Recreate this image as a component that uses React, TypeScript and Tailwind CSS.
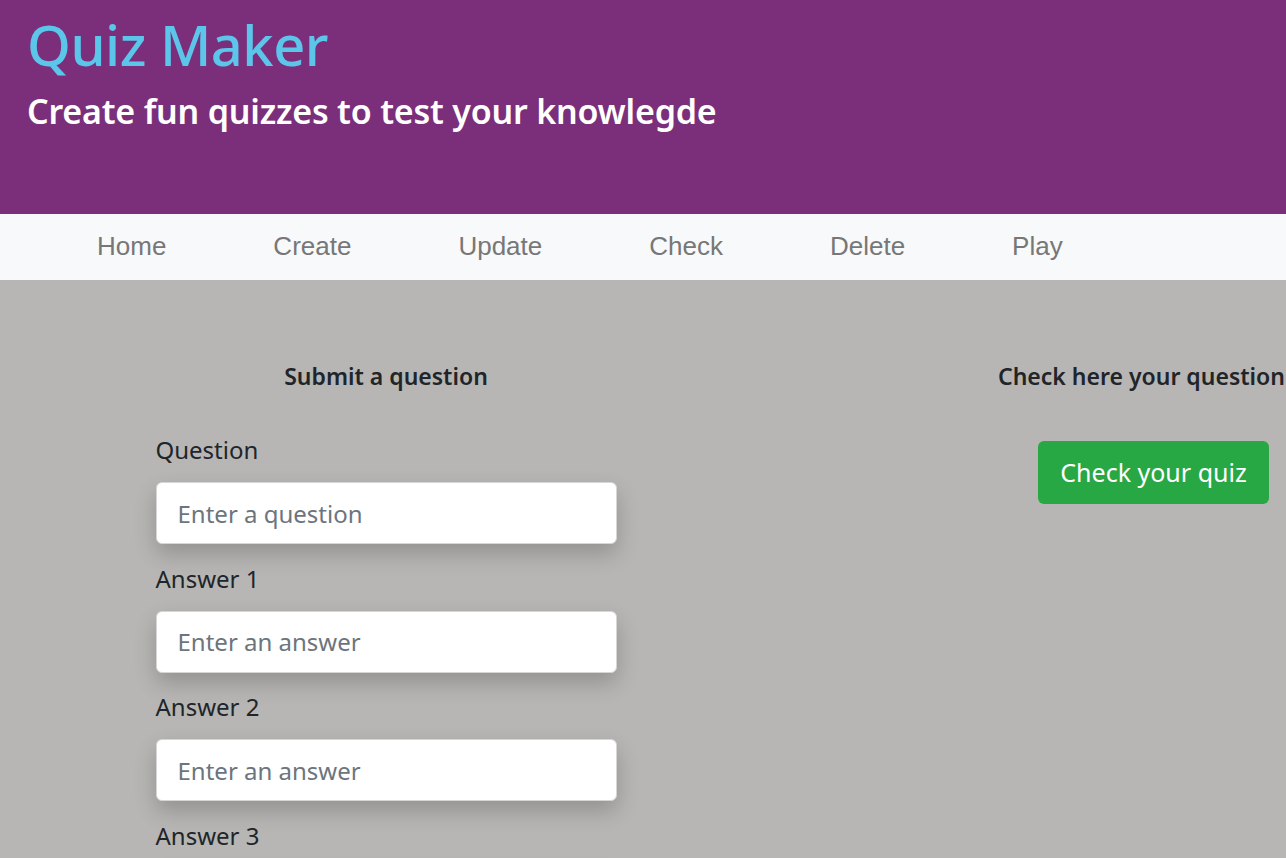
import React from "react";

const font = { fontFamily: '"Noto Sans", "Open Sans", sans-serif' };

function Field({ label, placeholder }: { label: string; placeholder: string }) {
  return (
    <div className="flex flex-col">
      <label className="text-[24px] leading-[30px] text-[#212529] mb-[17px]">{label}</label>
      <input
        className="w-[461px] h-[62px] rounded-[6px] border border-[#d6d6d6] bg-white pl-[21px] text-[24px] text-[#212529] placeholder:text-[#6c757d] outline-none shadow-[0_10px_22px_rgba(0,0,0,0.2)] mb-[19.5px]"
        placeholder={placeholder}
      />
    </div>
  );
}

export default function App() {
  const nav = ["Home", "Create", "Update", "Check", "Delete", "Play"];
  return (
    <div className="w-[1286px] h-[858px] overflow-hidden bg-[#b7b6b4]" style={font}>
      <header className="h-[214px] bg-[#7b2f7b] pl-[27px] pt-[8px]">
        <h1 className="text-[56px] leading-[72px] font-medium text-[#5bc5ea] tracking-[-0.5px]">Quiz Maker</h1>
        <h2 className="text-[34px] leading-[50px] mt-[6px] font-semibold text-white tracking-[-0.2px]">Create fun quizzes to test your knowlegde</h2>
      </header>
      <nav className="h-[66px] bg-[#f8f9fa] flex items-center pl-[97px] gap-[107px]">
        {nav.map((n) => (
          <span key={n} className="text-[26px] text-[#777777] -translate-y-[1px]" style={{ fontFamily: '"Liberation Sans", Arial, sans-serif' }}>
            {n}
          </span>
        ))}
      </nav>
      <main className="flex pt-[80px]">
        <section className="w-[772px] flex flex-col items-center">
          <h3 className="text-[23px] leading-[32px] font-semibold text-[#212529] mb-[43px]">Submit a question</h3>
          <div className="flex flex-col">
            <Field label="Question" placeholder="Enter a question" />
            <Field label="Answer 1" placeholder="Enter an answer" />
            <Field label="Answer 2" placeholder="Enter an answer" />
            <Field label="Answer 3" placeholder="Enter an answer" />
          </div>
        </section>
        <section className="flex flex-col items-start pl-[226px]">
          <h3 className="text-[23px] leading-[32px] font-semibold text-[#212529] whitespace-nowrap">Check here your question</h3>
          <button className="ml-[40px] mt-[49px] w-[231px] h-[63px] rounded-[6px] bg-[#28a745] text-white text-[25px]">
            Check your quiz
          </button>
        </section>
      </main>
    </div>
  );
}
